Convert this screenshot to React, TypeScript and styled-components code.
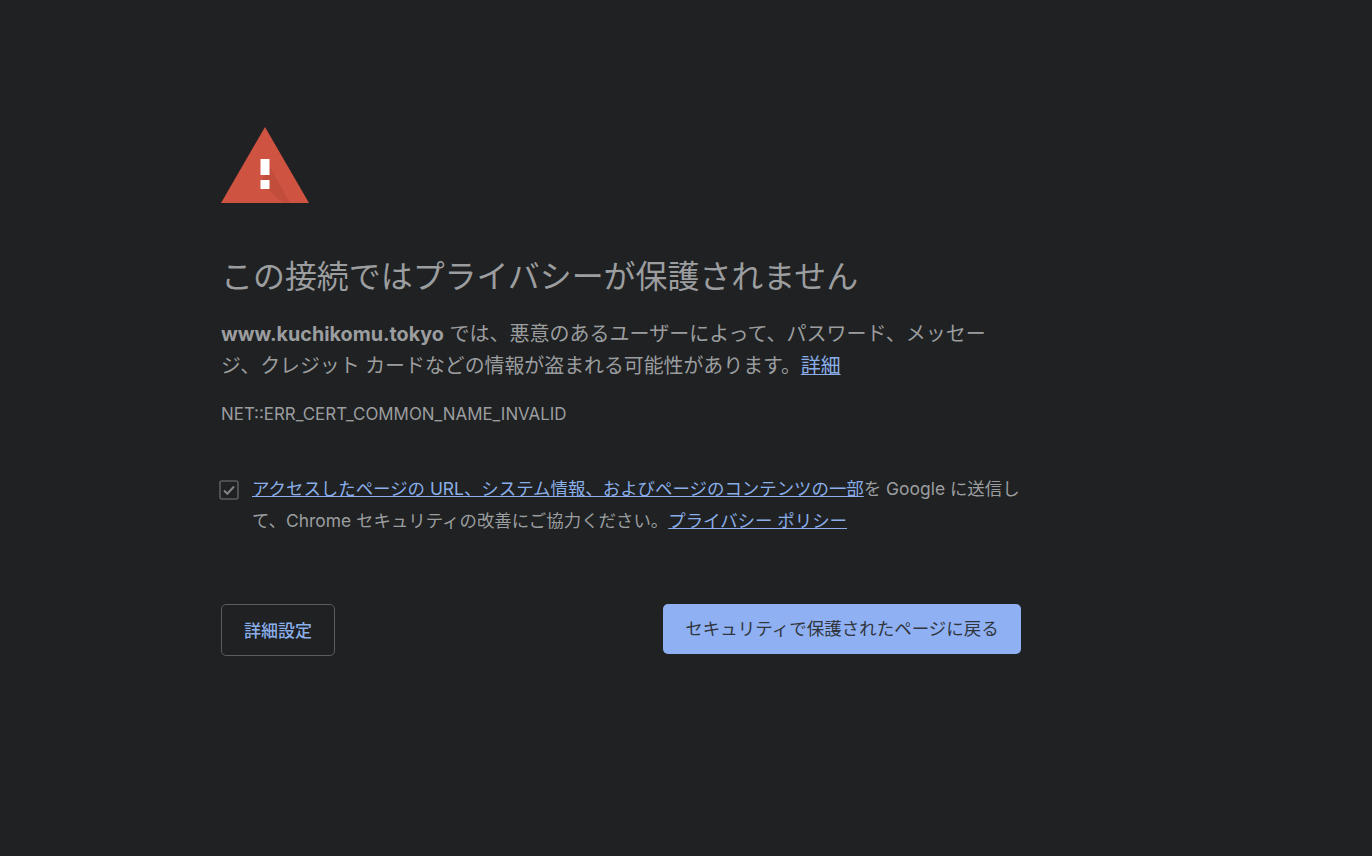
import React from "react";
import styled, { createGlobalStyle } from "styled-components";

const GlobalStyle = createGlobalStyle`
  html, body {
    margin: 0;
    background: #1f2123;
  }
  body {
    font-family: Inter, "Noto Sans CJK JP", sans-serif;
  }
`;

const WarningIcon: React.FC = () => (
  <svg width="90" height="78" viewBox="0 0 90 78">
    <polygon points="44,1 88,77 0,77" fill="#ce5340" />
    <polygon points="48.5,40 69,77 62,77 40,57" fill="#c24d3b" />
    <rect x="39.5" y="33" width="9" height="16" fill="#fff" />
    <rect x="39.5" y="54" width="9" height="9" fill="#fff" />
  </svg>
);

const CheckIcon: React.FC = () => (
  <svg width="20" height="20" viewBox="0 0 20 20">
    <rect x="1" y="1" width="18" height="18" rx="2" fill="none" stroke="#5b5c5e" strokeWidth="1.6" />
    <path d="M5 10.5l3.4 3.2L15 6.6" fill="none" stroke="#808184" strokeWidth="2.2" />
  </svg>
);

const App: React.FC = () => {
  return (
    <Page>
      <GlobalStyle />
      <Main>
        <IconWrap>
          <WarningIcon />
        </IconWrap>
        <Title>この接続ではプライバシーが保護されません</Title>
        <Message>
          <b>www.kuchikomu.tokyo</b> では、悪意のあるユーザーによって、パスワード、メッセー
          <br />
          <SecondLine>
            ジ、クレジット カードなどの情報が盗まれる可能性があります。<Link>詳細</Link>
          </SecondLine>
        </Message>
        <ErrorCode>NET::ERR_CERT_COMMON_NAME_INVALID</ErrorCode>
        <OptIn>
          <CheckBox>
            <CheckIcon />
          </CheckBox>
          <OptInText>
            <Link>アクセスしたページの URL、システム情報、およびページのコンテンツの一部</Link>を Google に送信し
            <br />
            て、Chrome セキュリティの改善にご協力ください。<Link>プライバシー ポリシー</Link>
          </OptInText>
        </OptIn>
        <Buttons>
          <OutlineButton>詳細設定</OutlineButton>
          <PrimaryButton>セキュリティで保護されたページに戻る</PrimaryButton>
        </Buttons>
      </Main>
    </Page>
  );
};

export default App;

const Page = styled.div`
  width: 100%;
  height: 856px;
  overflow: hidden;
  background: #1f2123;
  padding: 126px 0 0 221px;
  box-sizing: border-box;
`;

const Main = styled.div`
  width: 800px;
  color: #9b9d9f;
`;

const IconWrap = styled.div`
  height: 78px;
  svg {
    display: block;
  }
`;

const Title = styled.h1`
  margin: 52px 0 0;
  font-size: 31.95px;
  line-height: 42px;
  font-weight: 400;
  color: #9b9d9f;
`;

const Message = styled.p`
  margin: 20px 0 0;
  font-size: 20px;
  line-height: 32px;
  white-space: nowrap;

  b {
    font-size: 19.75px;
    font-weight: 700;
  }
`;

const SecondLine = styled.span`
  font-size: 19.9px;
`;

const Link = styled.span`
  color: #8aaee8;
  text-decoration: underline;
`;

const ErrorCode = styled.div`
  margin-top: 16px;
  font-size: 16.9px;
  line-height: 32px;
`;

const OptIn = styled.div`
  margin-top: 43px;
  display: flex;
`;

const CheckBox = styled.div`
  width: 31px;
  margin-left: -2px;
  padding: 7px 2px 0 0;
  flex: none;
  svg {
    display: block;
  }
`;

const OptInText = styled.div`
  font-size: 17.43px;
  line-height: 32px;
  white-space: nowrap;
`;

const Buttons = styled.div`
  margin-top: 67px;
  display: flex;
  justify-content: space-between;
  align-items: flex-start;
`;

const OutlineButton = styled.button`
  width: 114px;
  height: 52px;
  padding: 0 0 2px;
  border: 1.5px solid #5b5d60;
  border-radius: 5px;
  background: transparent;
  color: #8aaee8;
  font: 500 17px Inter, "Noto Sans CJK JP", sans-serif;
`;

const PrimaryButton = styled.button`
  width: 358px;
  height: 50px;
  padding: 0 0 4px;
  border: 0;
  border-radius: 5px;
  background: #8fb1f3;
  color: #31363f;
  font: 400 17.5px Inter, "Noto Sans CJK JP", sans-serif;
`;
